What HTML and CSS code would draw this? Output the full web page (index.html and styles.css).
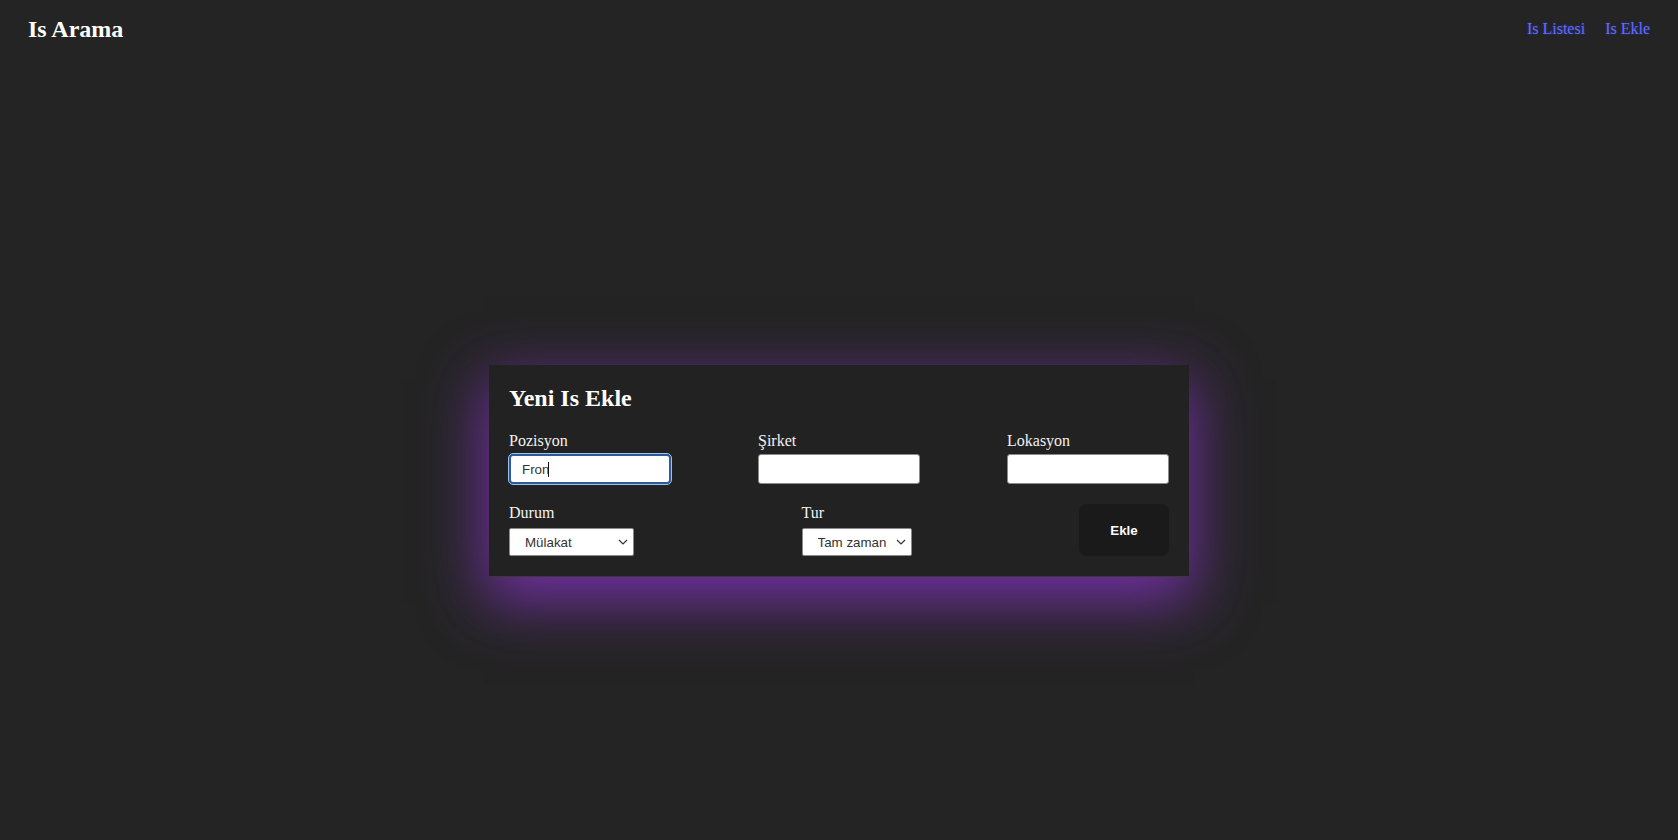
FILE: index.html
```html
<!DOCTYPE html>
<html lang="tr">
<head>
<meta charset="utf-8">
<title>Is Arama</title>
<link rel="stylesheet" href="styles.css">
</head>
<body>
<header class="topbar">
  <h1 class="brand">Is Arama</h1>
  <nav class="nav">
    <a href="#" class="nav-link">Is Listesi</a>
    <a href="#" class="nav-link">Is Ekle</a>
  </nav>
</header>
<main class="main">
  <form class="card">
    <h2 class="card-title">Yeni Is Ekle</h2>
    <div class="row row-top">
      <div class="field">
        <label class="label">Pozisyon</label>
        <div class="input-wrap">
          <input class="input input-focused" type="text" value="Fron">
          <span class="caret"></span>
        </div>
      </div>
      <div class="field">
        <label class="label">Şirket</label>
        <input class="input" type="text">
      </div>
      <div class="field">
        <label class="label">Lokasyon</label>
        <input class="input" type="text">
      </div>
    </div>
    <div class="row row-bottom">
      <div class="field">
        <label class="label">Durum</label>
        <div class="select-wrap">
          <select class="select select-durum">
            <option>Mülakat</option>
          </select>
          <svg class="chevron" width="10" height="6" viewBox="0 0 10 6"><path d="M1 1 L5 5 L9 1" fill="none" stroke="#333" stroke-width="1.2"/></svg>
        </div>
      </div>
      <div class="field">
        <label class="label">Tur</label>
        <div class="select-wrap">
          <select class="select select-tur">
            <option>Tam zaman</option>
          </select>
          <svg class="chevron" width="10" height="6" viewBox="0 0 10 6"><path d="M1 1 L5 5 L9 1" fill="none" stroke="#333" stroke-width="1.2"/></svg>
        </div>
      </div>
      <button type="button" class="btn">Ekle</button>
    </div>
  </form>
</main>
</body>
</html>
```

FILE: styles.css
```css
* { box-sizing: border-box; }

html, body {
  margin: 0;
  padding: 0;
  background: #242424;
}

body {
  font-family: "Liberation Serif", "Times New Roman", serif;
  color: rgba(255, 255, 255, 0.92);
}

.topbar {
  display: flex;
  align-items: center;
  justify-content: space-between;
  padding: 15px 28px 15px 28px;
  height: 58px;
}

.brand {
  margin: 0;
  font-size: 24px;
  font-weight: bold;
  color: #fff;
}

.nav {
  display: flex;
  gap: 20px;
}

.nav-link {
  color: #646cff;
  text-decoration: none;
  font-size: 16px;
  text-shadow: 0 0 3px rgba(60, 70, 200, 0.6);
}

.main {
  height: calc(100vh - 14px);
  display: flex;
  align-items: center;
  justify-content: center;
}

.card {
  width: 700px;
  padding: 20px;
  background: #222222;
  box-shadow: 0 20px 56px 5px rgb(112, 48, 160);
  border-bottom: 1px solid #3a3a3a;
}

.card-title {
  margin: 0 0 20px 0;
  font-size: 24px;
  font-weight: bold;
  color: #fff;
  line-height: 27px;
}

.row {
  display: flex;
  justify-content: space-between;
}

.row-top {
  margin-bottom: 20px;
}

.row-bottom {
  align-items: flex-end;
}

.field {
  display: flex;
  flex-direction: column;
}

.label {
  font-size: 16px;
  line-height: 18px;
  color: #f2f2f2;
}

.row-top .label { margin-bottom: 4px; }
.row-bottom .label { margin-bottom: 6px; }

.input-wrap,
.select-wrap {
  position: relative;
}

.input {
  display: block;
  width: 162px;
  height: 30px;
  padding: 0 11px;
  font-family: "Liberation Sans", Arial, sans-serif;
  font-size: 13.33px;
  color: #333;
  background: #fff;
  border: 1px solid #8a8a8a;
  border-radius: 3px;
}

.input-focused {
  border: 2px solid #2e5a9a;
  outline: 1px solid #9cc0ef;
  border-radius: 4px;
  padding: 0 11px;
}

.caret {
  position: absolute;
  left: 39px;
  top: 8px;
  width: 1px;
  height: 15px;
  background: #111;
}

.select {
  display: block;
  height: 28px;
  padding: 0 20px 0 15px;
  font-family: "Liberation Sans", Arial, sans-serif;
  font-size: 13.33px;
  color: #333;
  background: #fff;
  border: 1px solid #8a8a8a;
  border-radius: 2px;
  -webkit-appearance: none;
  appearance: none;
}

.chevron {
  position: absolute;
  right: 6px;
  top: 11px;
  pointer-events: none;
}

.select-durum { width: 125px; }
.select-tur { width: 110px; }

.btn {
  width: 90px;
  height: 52px;
  padding: 0;
  font-family: "Liberation Sans", Arial, sans-serif;
  font-size: 13.33px;
  font-weight: bold;
  color: #fff;
  background: #1a1a1a;
  border: 1px solid transparent;
  border-radius: 8px;
  cursor: pointer;
}
```
